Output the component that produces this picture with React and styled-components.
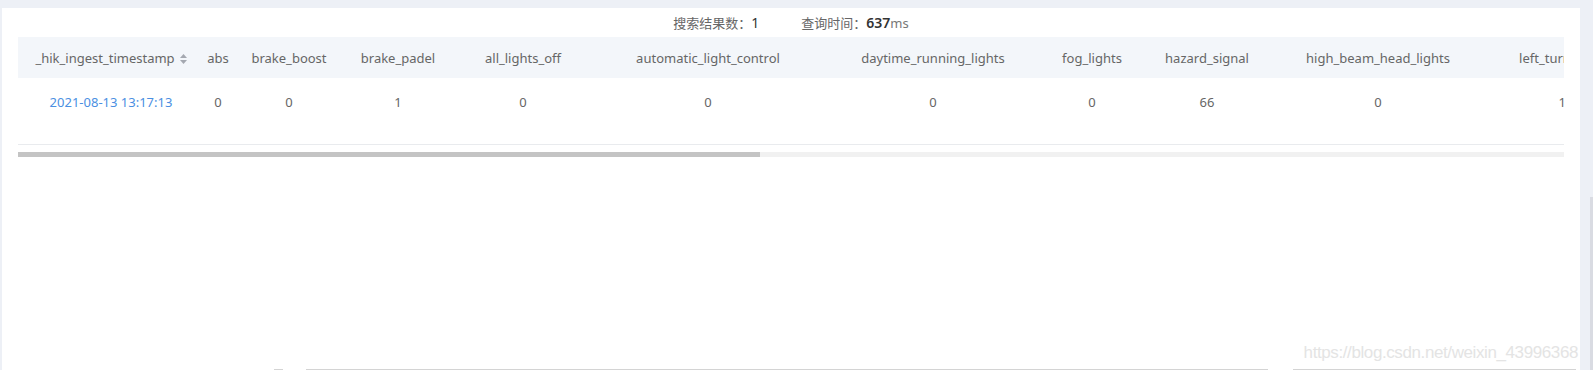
import React from 'react';
import styled, { createGlobalStyle } from 'styled-components';

const GlobalStyle = createGlobalStyle`
  html, body {
    margin: 0;
    padding: 0;
    height: 370px;
    background: #edf0f6;
    overflow: hidden;
  }
  body {
    font-family: "Noto Sans", "Noto Sans CJK SC", sans-serif;
  }
`;

const Page = styled.div`
  display: flex;
  height: 370px;
  padding: 8px 0 0 2px;
  box-sizing: border-box;
  overflow: hidden;
`;

const Panel = styled.main`
  position: relative;
  flex: 1;
  min-width: 0;
  display: flex;
  flex-direction: column;
  padding: 0 16px;
  background: #fff;
`;

const Gutter = styled.aside`
  width: 13px;
  display: flex;
  justify-content: flex-end;
  align-items: flex-start;
  padding-top: 189px;
  box-sizing: border-box;
`;

const GutterThumb = styled.div`
  width: 3px;
  height: 173px;
  background: #d9dbe2;
`;

const Summary = styled.div`
  height: 29px;
  display: flex;
  justify-content: center;
  align-items: center;
  gap: 42px;
  font-size: 13px;
  color: #666;
`;

const Stat = styled.span`
  display: inline-flex;
  align-items: baseline;
`;

const StatValue = styled.b`
  font-weight: ${(p) => (p.$bold ? 600 : 400)};
  font-size: 14px;
  color: #333;
`;

const Unit = styled.span`
  font-size: 13px;
  color: #777;
`;

const TableWrap = styled.div`
  overflow: hidden;
`;

const Table = styled.table`
  width: 3221px;
  table-layout: fixed;
  border-collapse: collapse;
  font-size: 13px;
`;

const Th = styled.th`
  height: 41px;
  padding: 0;
  background: #f3f6fa;
  color: #666;
  font-weight: 400;
  text-align: center;
  white-space: nowrap;
  overflow: hidden;
`;

const Td = styled.td`
  padding: 14px 0 32px;
  line-height: 20px;
  color: #666;
  text-align: center;
  white-space: nowrap;
  overflow: hidden;
  border-bottom: 1px solid #e9ebee;
`;

const TimeLink = styled.span`
  color: #4b8fe2;
`;

const SortIcon = styled.svg`
  width: 7px;
  height: 10px;
  margin-left: 5px;
  vertical-align: -1px;
`;

const ScrollTrack = styled.div`
  height: 5px;
  margin-top: 7px;
  background: #f1f1f1;
`;

const ScrollThumb = styled.div`
  height: 100%;
  background: #c4c4c4;
`;

const Watermark = styled.div`
  position: absolute;
  right: 2px;
  bottom: 7px;
  font-family: "Liberation Sans", sans-serif;
  font-size: 17px;
  letter-spacing: -0.4px;
  color: #e4e4e4;
  pointer-events: none;
`;

const BottomEdge = styled.div`
  margin-top: auto;
  display: flex;
  height: 1px;
  margin-left: 256px;
  margin-right: -14px;
`;

const EdgePart = styled.div`
  height: 1px;
  width: ${(p) => p.$w}px;
  margin-left: ${(p) => p.$gap || 0}px;
  background: #d4d4d4;
`;

const columns = [
  { key: '_hik_ingest_timestamp', width: 186, sortable: true },
  { key: 'abs', width: 28 },
  { key: 'brake_boost', width: 114 },
  { key: 'brake_padel', width: 104 },
  { key: 'all_lights_off', width: 146 },
  { key: 'automatic_light_control', width: 224 },
  { key: 'daytime_running_lights', width: 226 },
  { key: 'fog_lights', width: 92 },
  { key: 'hazard_signal', width: 138 },
  { key: 'high_beam_head_lights', width: 204 },
  { key: 'left_turn_signal', width: 172 },
  { key: 'right_turn_signal', width: 180 },
  { key: 'low_beam_head_lights', width: 200 },
  { key: 'parking_lights', width: 150 },
  { key: 'reverse_gear', width: 140 },
  { key: 'seat_belt', width: 120 },
  { key: 'speed', width: 100 },
  { key: 'steering_angle', width: 150 },
  { key: 'tire_pressure', width: 150 },
  { key: 'vin', width: 250 },
  { key: 'window_status', width: 147 },
];

const TABLE_WIDTH = columns.reduce((sum, c) => sum + c.width, 0);
const VIEW_WIDTH = 1546;

const row = {
  _hik_ingest_timestamp: '2021-08-13 13:17:13',
  abs: 0,
  brake_boost: 0,
  brake_padel: 1,
  all_lights_off: 0,
  automatic_light_control: 0,
  daytime_running_lights: 0,
  fog_lights: 0,
  hazard_signal: 66,
  high_beam_head_lights: 0,
  left_turn_signal: 13,
  right_turn_signal: 0,
  low_beam_head_lights: 1,
  parking_lights: 0,
  reverse_gear: 0,
  seat_belt: 1,
  speed: 42,
  steering_angle: 3,
  tire_pressure: 230,
  vin: 'LSVAU2180N2183294',
  window_status: 0,
};

const Sort = () => (
  <SortIcon viewBox="0 0 7 10">
    <path d="M3.5 0 L7 4 L0 4 Z" fill="#a4a8b0" />
    <path d="M3.5 10 L7 6 L0 6 Z" fill="#a4a8b0" />
  </SortIcon>
);

const App = () => (
  <>
    <GlobalStyle />
    <Page>
      <Panel>
        <Summary>
          <Stat>
            搜索结果数：<StatValue>1</StatValue>
          </Stat>
          <Stat>
            查询时间：<StatValue $bold>637</StatValue>
            <Unit>ms</Unit>
          </Stat>
        </Summary>
        <TableWrap>
          <Table>
            <colgroup>
              {columns.map((c) => (
                <col key={c.key} style={{ width: c.width }} />
              ))}
            </colgroup>
            <thead>
              <tr>
                {columns.map((c) => (
                  <Th key={c.key}>
                    {c.key}
                    {c.sortable && <Sort />}
                  </Th>
                ))}
              </tr>
            </thead>
            <tbody>
              <tr>
                {columns.map((c) => (
                  <Td key={c.key}>
                    {c.sortable ? <TimeLink>{row[c.key]}</TimeLink> : row[c.key]}
                  </Td>
                ))}
              </tr>
            </tbody>
          </Table>
        </TableWrap>
        <ScrollTrack>
          <ScrollThumb style={{ width: `${(VIEW_WIDTH / TABLE_WIDTH) * 100}%` }} />
        </ScrollTrack>
        <BottomEdge>
          <EdgePart $w={9} />
          <EdgePart $w={962} $gap={23} />
          <EdgePart $w={283} $gap={25} />
        </BottomEdge>
        <Watermark>https://blog.csdn.net/weixin_43996368</Watermark>
      </Panel>
      <Gutter>
        <GutterThumb />
      </Gutter>
    </Page>
  </>
);

export default App;
